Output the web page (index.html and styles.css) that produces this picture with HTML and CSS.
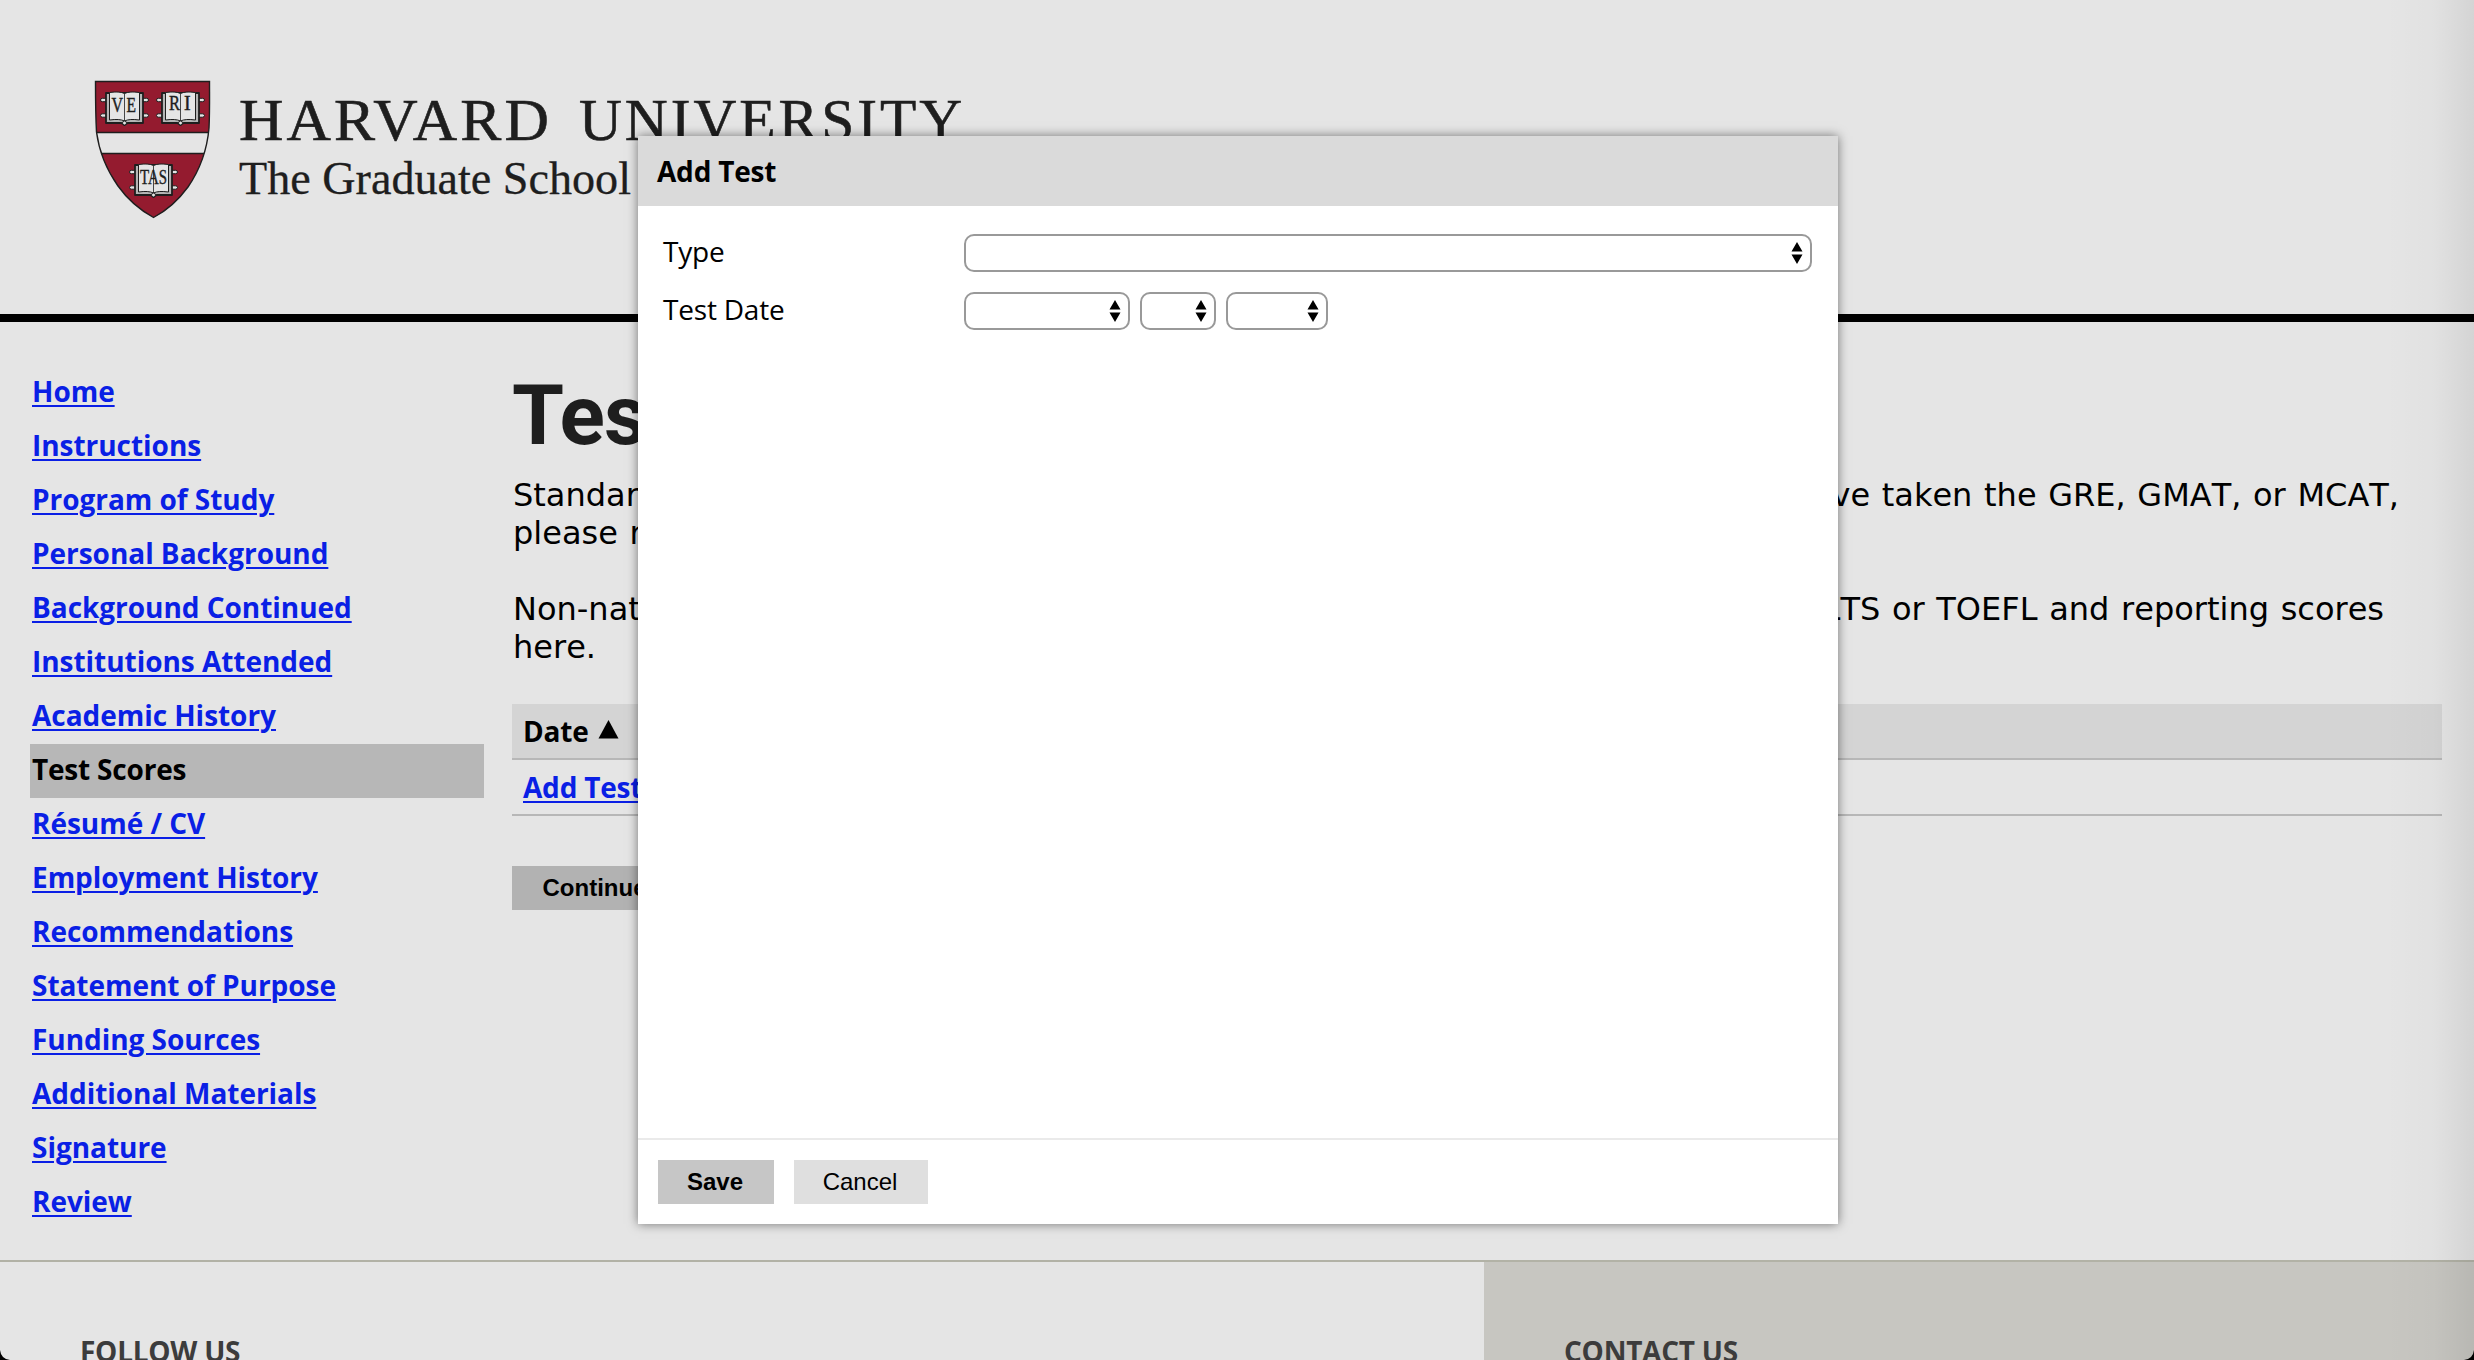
FILE: index.html
```html
<!DOCTYPE html>
<html lang="en">
<head>
<meta charset="utf-8">
<title>Test Scores</title>
<link rel="stylesheet" href="styles.css">
</head>
<body>
<div class="page">
  <header class="site-header">
    <svg class="logo" width="1100" height="170" viewBox="80 70 1100 170">
      <defs>
        <clipPath id="shield"><path d="M95.500 81.500H209.500C209.500 98 209.800 112 209 128C207 151 199 171 188 187C177 202 166 211 153.500 217.500C140 210 128 200 118 186C106 169 99 151 96.500 132C95.500 114 95.500 98 95.500 81.500Z"/></clipPath>
        <g id="book" stroke="#1e1e1e" stroke-width="1.300" stroke-linejoin="round">
          <path d="M-24 -10q0-1.700 2-1.700h5v3.400h-5q-2 0-2-1.700zM24 -10q0-1.700-2-1.700h-5v3.400h5q2 0 2-1.700zM-24 5.500q0-1.700 2-1.700h5v3.400h-5q-2 0-2-1.700zM24 5.500q0-1.700-2-1.700h-5v3.400h5q2 0 2-1.700z" fill="#e5e5e5" stroke-width="1"/>
          <path d="M-18.500 -17H18.500V13H3L0 15L-3 13H-18.500Z" fill="#b5b5b5" stroke-width="1.800"/>
          <path d="M-15 -17.500Q-5 -19 0 -16.500Q5 -19 15 -17.500V10Q5 8.500 0 11Q-5 8.500 -15 10Z" fill="#e5e5e5" stroke-width="1"/>
          <path d="M0 -16.500V11" fill="none" stroke-width=".8"/>
          <circle cx="0" cy="13" r="2" fill="#e5e5e5" stroke-width="1"/>
        </g>
      </defs>
      <g clip-path="url(#shield)">
        <path d="M90 75H215V225H90Z" fill="#941b2f"/>
        <path d="M90 132.500H215V153.500H90Z" fill="#e5e5e5" stroke="#1e1e1e" stroke-width="1.300"/>
      </g>
      <path d="M95.500 81.500H209.500C209.500 98 209.800 112 209 128C207 151 199 171 188 187C177 202 166 211 153.500 217.500C140 210 128 200 118 186C106 169 99 151 96.500 132C95.500 114 95.500 98 95.500 81.500Z" fill="none" stroke="#1e1e1e" stroke-width="1.400"/>
      <use href="#book" x="124.500" y="110"/>
      <use href="#book" x="180.500" y="110"/>
      <use href="#book" x="153.500" y="182"/>
      <g class="motto">
        <text x="111.500" y="111.500" textLength="11.500" lengthAdjust="spacingAndGlyphs">V</text><text x="126.500" y="111.500" textLength="9.500" lengthAdjust="spacingAndGlyphs">E</text>
        <text x="169" y="110" textLength="11" lengthAdjust="spacingAndGlyphs">R</text><text x="184" y="110">I</text>
        <text x="140" y="184" textLength="27" lengthAdjust="spacingAndGlyphs">TAS</text>
      </g>
      <text class="wordmark" x="239" y="140" textLength="313" lengthAdjust="spacingAndGlyphs">HARVARD</text>
      <text class="wordmark" x="579" y="140" textLength="386" lengthAdjust="spacingAndGlyphs">UNIVERSITY</text>
      <text class="school" x="239" y="194" textLength="392" lengthAdjust="spacingAndGlyphs">The Graduate School</text>
    </svg>
  </header>
  <div class="columns">
    <nav class="nav">
      <a href="#">Home</a>
      <a href="#">Instructions</a>
      <a href="#">Program of Study</a>
      <a href="#">Personal Background</a>
      <a href="#">Background Continued</a>
      <a href="#">Institutions Attended</a>
      <a href="#">Academic History</a>
      <a href="#" class="active">Test Scores</a>
      <a href="#">Résumé / CV</a>
      <a href="#">Employment History</a>
      <a href="#">Recommendations</a>
      <a href="#">Statement of Purpose</a>
      <a href="#">Funding Sources</a>
      <a href="#">Additional Materials</a>
      <a href="#">Signature</a>
      <a href="#">Review</a>
    </nav>
    <main class="main">
      <h1>Test Scores</h1>
      <div class="intro">
        <div class="line first"><span>Standardized test scores</span><span>If you have taken the GRE, GMAT, or MCAT,</span></div>
        <div class="line">please report your scores here.</div>
      </div>
      <div class="intro">
        <div class="line second"><span>Non-native English speakers</span><span>by taking IELTS or TOEFL and reporting scores</span></div>
        <div class="line">here.</div>
      </div>
      <div class="table">
        <div class="row head">Date <svg width="21" height="20" viewBox="0 0 21 20"><path d="M10.500 0L20.500 18.500H.5Z"/></svg></div>
        <div class="row"><a href="#">Add Test</a></div>
      </div>
      <button class="continue">Continue</button>
    </main>
  </div>
  <footer class="footer">
    <section class="follow">FOLLOW US</section>
    <section class="contact">CONTACT US</section>
  </footer>
</div>
<div class="edge-shade"></div>
<svg class="corner left" width="10" height="10"><path d="M0 0Q1 9 10 10H0Z"/></svg>
<svg class="corner right" width="10" height="10"><path d="M10 0Q9 9 0 10H10Z"/></svg>
<div class="dialog">
  <div class="dialog-head">Add Test</div>
  <div class="dialog-body">
    <div class="field"><label>Type</label>
      <div class="select type"><svg class="arrows" width="12" height="22" viewBox="0 0 12 22"><path d="M6 0L11.500 9.500H.5ZM6 22L11.500 12.500H.5Z"/></svg></div>
    </div>
    <div class="field"><label>Test Date</label>
      <div class="select month"><svg class="arrows" width="12" height="22" viewBox="0 0 12 22"><path d="M6 0L11.500 9.500H.5ZM6 22L11.500 12.500H.5Z"/></svg></div>
      <div class="select day"><svg class="arrows" width="12" height="22" viewBox="0 0 12 22"><path d="M6 0L11.500 9.500H.5ZM6 22L11.500 12.500H.5Z"/></svg></div>
      <div class="select year"><svg class="arrows" width="12" height="22" viewBox="0 0 12 22"><path d="M6 0L11.500 9.500H.5ZM6 22L11.500 12.500H.5Z"/></svg></div>
    </div>
  </div>
  <div class="dialog-foot">
    <button class="save">Save</button>
    <button class="cancel">Cancel</button>
  </div>
</div>
</body>
</html>
```
FILE: styles.css
```css
* { box-sizing: border-box; }
body {
  margin: 0;
  height: 1360px;
  overflow: hidden;
  background: #e5e5e5;
  color: #000;
  font: 28px/38px "Open Sans", sans-serif;
}
.page { height: 1360px; display: flex; flex-direction: column; }
.site-header { height: 322px; padding: 70px 0 0 80px; border-bottom: 8px solid #000; flex: none; }
.logo { display: block; fill: #1e1e1e; }
.wordmark { font: 60px "Liberation Serif", serif; letter-spacing: 3px; stroke: #1e1e1e; stroke-width: .6px; }
.school { font: 46px "Liberation Serif", serif; stroke: #1e1e1e; stroke-width: .3px; }
.motto { font: 20px "Liberation Serif", serif; stroke: #1e1e1e; stroke-width: .4px; }
.columns { display: flex; height: 938px; padding: 44px 32px 0 30px; flex: none; }
.nav { width: 454px; margin-right: 28px; display: flex; flex-direction: column; }
.nav a { height: 54px; padding: 0 2px; line-height: 50px; font-weight: 700; letter-spacing: -.04px; }
a { color: #0a1fe5; text-decoration-thickness: 2px; text-underline-offset: 3px; }
.nav a.active { background: #b7b7b7; color: #000; text-decoration: none; letter-spacing: -.2px; }
.main { width: 1930px; padding-top: 8px; }
h1 { margin: 0 0 5px; font: 700 84px/84px Roboto, sans-serif; letter-spacing: -.8px; color: #1e1e1e; height: 98px; }
.intro { font: 32px/38px "DejaVu Sans", sans-serif; font-kerning: none; word-spacing: 1.5px; margin: -1px 0 39px; white-space: nowrap; padding-left: 1px; }
.line { display: flex; justify-content: space-between; }
.first { width: 1886px; }
.second { width: 1871px; }
.table { margin-top: -1px; }
.row { height: 56px; padding: 0 11px; border-bottom: 2px solid #b7b7b7; line-height: 54px; font-weight: 700; letter-spacing: -.2px; }
.row.head { background: #d4d4d4; }
.row svg { margin-left: 2px; position: relative; top: -2px; }
button { border: 0; padding: 0; font: 24px "Liberation Sans", sans-serif; color: #000; height: 44px; }
.continue { display: block; margin-top: 50px; width: 165px; background: #b2b2b2; font-weight: 700; }
.footer { flex: none; height: 100px; border-top: 2px solid #b2b2a6; display: flex; font-size: 28px; font-weight: 700; color: #3c3c3c; overflow: hidden; letter-spacing: -.25px; }
.follow, .contact { padding: 70px 80px 0; white-space: nowrap; }
.follow { width: 1484px; }
.contact { flex: 1; background: #c7c6c1; }
.edge-shade { position: absolute; top: 0; right: 0; width: 90px; height: 1360px; background: linear-gradient(to right, rgba(0,0,0,0), rgba(0,0,0,.015) 55%, rgba(0,0,0,.075)); }
.corner { position: absolute; bottom: 0; }
.corner.left { left: 0; }
.corner.right { right: 0; }
.dialog { position: absolute; left: 638px; top: 136px; width: 1200px; height: 1088px; background: #fff; box-shadow: 0 0 10px rgba(0,0,0,.5); display: flex; flex-direction: column; }
.dialog-head { height: 70px; padding-left: 19px; background: #dadada; line-height: 71px; font-weight: 700; letter-spacing: -.2px; }
.dialog-body { flex: 1; padding: 28px 26px 0 25px; display: flex; flex-direction: column; gap: 20px; }
.field { display: flex; height: 38px; }
.field label { width: 301px; line-height: 34px; letter-spacing: -.2px; }
.select { height: 38px; border: 2px solid #999; border-radius: 10px; display: flex; justify-content: flex-end; align-items: center; padding-right: 7px; margin-right: 10px; }
.type { flex: 1; margin-right: 0; }
.month { width: 166px; }
.day { width: 76px; }
.year { width: 102px; }
.dialog-foot { height: 86px; border-top: 2px solid #eaeaea; padding: 20px; display: flex; gap: 20px; }
.save { width: 116px; background: #c6c6c6; font-weight: 700; }
.cancel { width: 134px; background: #dfdfdf; }
.save, .cancel { padding-right: 2px; }
```
